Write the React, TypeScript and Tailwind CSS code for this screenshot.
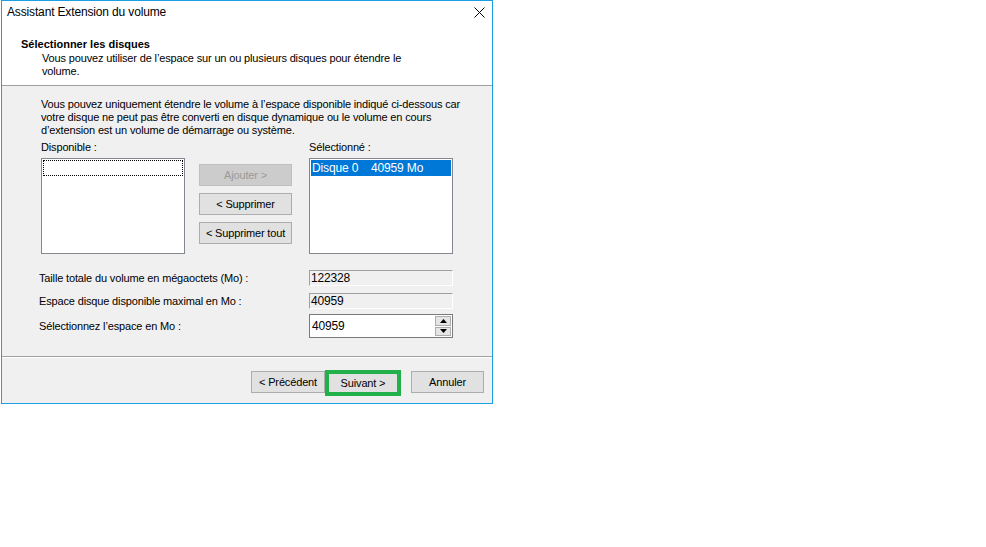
import React from 'react';

const font = { fontFamily: '"Liberation Sans", Arial, sans-serif' };

function WinButton({ label, disabled, className }: { label: string; disabled?: boolean; className?: string }) {
    return (
        <div
            className={
                'flex h-[22px] items-center justify-center border text-[11px] leading-[13px] ' +
                (disabled ? 'border-[#bfbfbf] bg-[#cccccc] text-[#9a9a9a] ' : 'border-[#adadad] bg-[#e1e1e1] text-black ') +
                (className ?? '')
            }
        >
            {label}
        </div>
    );
}

function ReadOnlyField({ value }: { value: string }) {
    return (
        <div className="flex h-[16px] w-[144px] items-center border border-[#a0a0a0] border-b-white border-r-white bg-[#f0f0f0] pl-[1px] text-[12px] leading-[14px] text-black">
            {value}
        </div>
    );
}

function SpinBox({ value }: { value: string }) {
    return (
        <div className="flex h-[24px] w-[144px] items-stretch border border-[#7a7a7a] bg-white">
            <div className="flex flex-1 items-center pl-[2px] text-[12px] leading-[14px] text-black">{value}</div>
            <div className="my-[1px] mr-[1px] flex w-[16px] flex-col gap-px">
                <div className="flex flex-1 items-center justify-center border border-[#adadad] bg-[#e5e5e5]">
                    <svg width="7" height="4" viewBox="0 0 7 4"><path d="M0 4 L3.5 0 L7 4 Z" fill="#000" /></svg>
                </div>
                <div className="flex flex-1 items-center justify-center border border-[#adadad] bg-[#e5e5e5]">
                    <svg width="7" height="4" viewBox="0 0 7 4"><path d="M0 0 L3.5 4 L7 0 Z" fill="#000" /></svg>
                </div>
            </div>
        </div>
    );
}

export default function App() {
    return (
        <div className="min-h-screen bg-white tracking-[-0.15px]" style={font}>
            <div className="ml-px flex w-[492px] flex-col border border-[#1ba1e2] bg-white">
                {/* title + wizard header */}
                <div className="h-[84px] bg-white">
                    <div className="flex h-[22px] items-center pl-[5px] pr-[7px]">
                        <span className="text-[12px] leading-[14px] text-black">Assistant Extension du volume</span>
                        <svg className="ml-auto" width="11" height="11" viewBox="0 0 11 11">
                            <path d="M0.5 0.5 L10.5 10.5 M10.5 0.5 L0.5 10.5" stroke="#000" strokeWidth="1" />
                        </svg>
                    </div>
                    <div className="mt-[15px] pl-[19px] text-[11px] font-bold leading-[13px] tracking-normal text-black">
                        Sélectionner les disques
                    </div>
                    <div className="mt-[1px] pl-[40px] text-[11px] leading-[13px] text-black">
                        Vous pouvez utiliser de l’espace sur un ou plusieurs disques pour étendre le
                        <br />
                        volume.
                    </div>
                </div>

                {/* body */}
                <div className="h-[271px] border-t border-[#a0a0a0] bg-[#f0f0f0] pt-[12px]">
                    <p className="pl-[39px] text-[11px] leading-[13px] text-black">
                        Vous pouvez uniquement étendre le volume à l’espace disponible indiqué ci-dessous car
                        <br />
                        votre disque ne peut pas être converti en disque dynamique ou le volume en cours
                        <br />
                        d’extension est un volume de démarrage ou système.
                    </p>

                    <div className="mt-[4px] flex pl-[39px]">
                        <div className="w-[144px]">
                            <div className="text-[11px] leading-[13px] text-black">Disponible :</div>
                            <div className="mt-[4px] h-[96px] border border-[#828790] bg-white p-px">
                                <div className="h-[16px] border border-dotted border-black"></div>
                            </div>
                        </div>
                        <div className="ml-[14px] flex w-[93px] flex-col gap-[7px] pt-[23px]">
                            <WinButton label="Ajouter >" disabled />
                            <WinButton label="< Supprimer" />
                            <WinButton label="< Supprimer tout" />
                        </div>
                        <div className="ml-[17px] w-[144px]">
                            <div className="text-[11px] leading-[13px] text-black">Sélectionné :</div>
                            <div className="mt-[4px] h-[96px] border border-[#828790] bg-white p-px">
                                <div className="flex h-[16px] items-center bg-[#0078d7] pl-[1px] text-[12px] leading-[14px] text-white">
                                    <span className="w-[59px]">Disque 0</span>
                                    <span>40959 Mo</span>
                                </div>
                            </div>
                        </div>
                    </div>

                    <div className="mt-[16px] flex flex-col gap-[7px] pl-[37px]">
                        <div className="flex items-center">
                            <span className="w-[270px] text-[11px] leading-[13px] text-black">Taille totale du volume en mégaoctets (Mo) :</span>
                            <ReadOnlyField value="122328" />
                        </div>
                        <div className="flex items-center">
                            <span className="w-[270px] text-[11px] leading-[13px] text-black">Espace disque disponible maximal en Mo :</span>
                            <ReadOnlyField value="40959" />
                        </div>
                        <div className="-mt-[2px] flex items-center">
                            <span className="w-[270px] text-[11px] leading-[13px] text-black">Sélectionnez l’espace en Mo :</span>
                            <SpinBox value="40959" />
                        </div>
                    </div>
                </div>

                {/* etched separator */}
                <div className="h-px bg-[#a0a0a0]"></div>
                <div className="h-px bg-white"></div>

                {/* footer */}
                <div className="flex h-[45px] items-start justify-end bg-[#f0f0f0] pr-[8px] pt-[13px]">
                    <WinButton label="< Précédent" className="w-[74px]" />
                    <div className="-mt-px h-[26px] w-[76px] border-[4px] border-[#22b04b] bg-[#e1e1e1]">
                        <div className="flex h-full items-center justify-center text-[11px] leading-[13px] text-black">Suivant &gt;</div>
                    </div>
                    <WinButton label="Annuler" className="ml-[10px] w-[73px]" />
                </div>
            </div>
        </div>
    );
}
